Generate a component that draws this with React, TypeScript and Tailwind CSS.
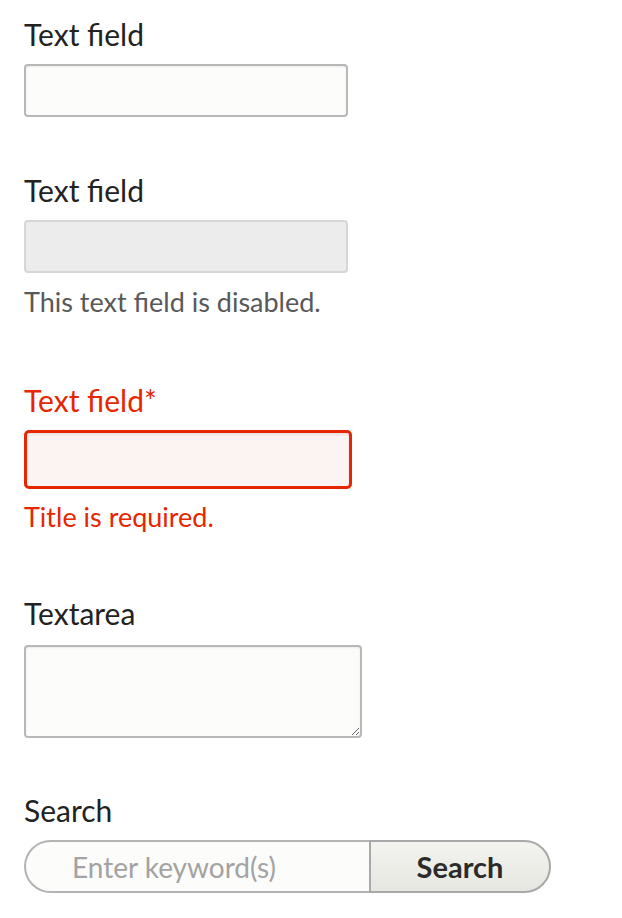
import React from "react";

const font = { fontFamily: "Lato, 'Open Sans', sans-serif" };

function Label({ children, error }: { children: React.ReactNode; error?: boolean }) {
  return (
    <label
      className={`block text-[30px] leading-[36px] ${error ? "text-[#e62600]" : "text-[#222]"}`}
    >
      {children}
    </label>
  );
}

export default function App() {
  return (
    <div className="min-h-screen bg-white pl-6 pt-4" style={font}>
      {/* plain text field */}
      <Label>Text field</Label>
      <input
        type="text"
        className="mt-3 block h-[53px] w-[324px] rounded-[4px] border-2 border-[#b8b8b8] bg-[#fcfcfa] shadow-[inset_0_1px_2px_rgba(0,0,0,0.08)] outline-none"
      />

      {/* disabled */}
      <div className="mt-[55px]">
        <Label>Text field</Label>
        <input
          type="text"
          disabled
          className="mt-3 block h-[53px] w-[324px] rounded-[4px] border-2 border-[#d6d6d6] bg-[#ececec]"
        />
        <p className="mt-[13px] text-[27px] leading-[32px] text-[#595959]">
          This text field is disabled.
        </p>
      </div>

      {/* error */}
      <div className="mt-[64px]">
        <Label error>Text field*</Label>
        <input
          type="text"
          className="mt-3 block h-[59px] w-[328px] rounded-[5px] border-[3px] border-[#e62600] bg-[#fcf4f2] shadow-[inset_0_2px_3px_rgba(0,0,0,0.08)] outline-none"
        />
        <p className="mt-3 text-[27px] leading-[32px] text-[#e62600]">Title is required.</p>
      </div>

      {/* textarea */}
      <div className="mt-[62px]">
        <Label>Textarea</Label>
        <textarea className="mt-[14px] block h-[93px] w-[338px] rounded-[4px] border-2 border-[#b8b8b8] bg-[#fcfcfa] shadow-[inset_0_1px_2px_rgba(0,0,0,0.08)] outline-none" />
      </div>

      {/* search */}
      <div className="mt-[54px]">
        <Label>Search</Label>
        <div className="mt-3 flex h-[53px] w-[527px]">
          <input
            type="search"
            placeholder="Enter keyword(s)"
            className="h-full w-[345px] rounded-l-full border-2 border-r-0 border-[#b3b3b3] bg-[#fcfcfa] pl-[46px] text-[28px] text-[#222] outline-none placeholder:text-[#a3a3a3]"
          />
          <button className="h-full flex-1 rounded-r-full border-2 border-[#a8a8a8] bg-gradient-to-b from-[#f3f3ef] to-[#e7e7e2] text-[29px] font-bold text-[#2b2b2b]">
            Search
          </button>
        </div>
      </div>
    </div>
  );
}
